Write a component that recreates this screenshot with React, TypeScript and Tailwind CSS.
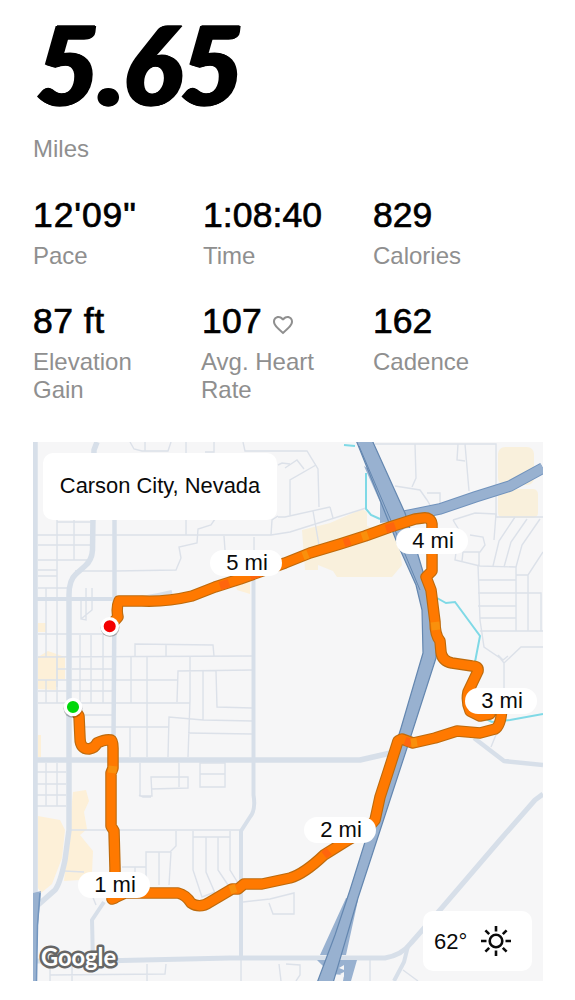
import { MdFavoriteBorder } from 'react-icons/md';

const stats = [
  { value: "12'09\"", label: 'Pace', tracking: 'tracking-[0.9px]' },
  { value: '1:08:40', label: 'Time', className: 'pl-px', tracking: 'tracking-[0.1px]' },
  { value: '829', label: 'Calories', tracking: 'tracking-normal' },
  { value: '87 ft', label: 'Elevation Gain', tracking: 'tracking-[0.5px]' },
  { value: '107', label: 'Avg. Heart Rate', heart: true, tracking: 'tracking-[0.2px]' },
  { value: '162', label: 'Cadence', tracking: 'tracking-normal' },
];

const minorRoads = [
  // north west
  'M130 442L134 449L142 451H168L171 442M145 442V451M186 442V453M214 442V452H205M243 442L245 451H307L318 469L319 507',
  'M57 520V687M74 520V560M57 522H92M38 545H92M38 560H88M38 570H57M38 576H57M75 571H115',
  'M35 535H271L290 532L366 508M333 518L330 507M115 571L176 570L181 558L179 547L197 543L198 529L211 525L215 519M186 520V535',
  'M278 465L282 463L290 464M290 515V480L316 465M285 468L297 460L304 469M278 516L272 520L271 535M278 517H285L330 507M313 511L319 545M224 536L225 550M254 537V550',
  'M38 588H68M46 588V657M86 588V620L81 619V600M92 588V610L81 619',
  // north east
  'M375 444H496V517H543M415 444L416 478L412 487M395 486L420 490L427 500L430 505M427 493H440V505M458 444L457 460L465 461M465 444L469 491',
  'M453 520L475 513L496 514L494 540M453 520L459 530L455 560L480 566L516 567V631M470 535L483 537L485 545L480 552H463L462 561M479 552V566',
  'M515 517L499 541L493 566M527 519L511 542L504 567M540 519L522 545L516 567M543 552L528 575V631M478 565L480 620L484 647L500 658L504 663L521 647H543M478 580H516M478 593H541V631M478 606H516M480 618H516M480 631H543M516 575H528M498 655L503 660L508 656M504 663V690M500 725L491 747',
  // downtown grid
  'M38 634H112M38 657L253 656M72 669H112M57 669H67M38 680H177M38 691H112M38 703H190M85 715H112M82 727H169M80 635V703M91 635V703M103 635V703M46 680V703M57 657V703',
  'M131 657V703M147 657V757M190 657L190 700L188 757M135 657V644L213 645L214 656M166 645V656M177 702L178 671L253 670M203 671V720M216 671L217 707L252 708M168 757L169 717L203 720L253 721M130 727V757M188 733L252 734',
  'M46 763V806M57 763V806M36 772H66M36 784H66M36 795H66M36 806H66M140 763V796H152L151 777H188V788L151 789M179 763V787M200 763H225V787H200ZM200 774H225M139 795L143 797H151',
  // south
  'M70 830H240M122 867H146M135 867V880M146 885V852H170L176 846V831M159 852V885M171 852L169 885M193 831V870L202 897L215 892M193 837H230M206 837V872L215 893M218 837V870L230 888M230 831V870L238 883M64 871L84 872M88 885L96 905',
  'M243 902L270 899L294 893V914H273L269 903M50 975L165 974L166 964M50 964V981M72 964V981M147 964V981M241 960V981M279 964L281 981M286 964L300 965V975L296 981M370 960V981M403 970L418 981',
];

const mainRoads = [
  { d: 'M35 442V894', w: 5.5 },
  { d: 'M97 442L94 450L92.500 550Q92 560 85 566L76 574Q69 580 69 595V800L69 830L65 860Q60 884 55 890L38 905', w: 5.5 },
  { d: 'M114.500 518V599L113.500 740', w: 4.5 },
  { d: 'M35 599H115Q135 601 172 592', w: 4 },
  { d: 'M253.500 575V795Q256 810 250 817L241 831V958', w: 4 },
  { d: 'M35 760H360L395 752', w: 5.5 },
  { d: 'M104 902L92 920L93 962', w: 4 },
  { d: 'M36 961L100 961L230 958H385Q402 955 411 943L440 910L500 840L535 800L543 794', w: 5 },
  { d: 'M408 946L404 962L394 981', w: 4 },
  { d: 'M474 738L504 761L543 765', w: 4.5 },
];

const freeway =
  'M356 440L388 520L398 545L416 585L422 610L423 653L401 728L365 842L350 890L335 935L317 983H333L358 898L390 800L408 745L436 658L437 635L430 600L424 575L415 545L405 513L372 440Z';
const arterial = 'M400 517L440 509L475 497L510 486L543 468';

const route =
  'M73 707L79 716L80 738Q80 749 89 749Q95 748 97 743Q105 739 111 740Q113 741 113 748L113 768L111 773L111 826L114 831L115 868L115 898L112 899L125 893L178 893Q186 895 191 903Q200 909 210 902L232 889L238 889L244 884L262 884L290 878Q304 874 324 855L348 840Q368 830 375 820L380 797L391 763L398 741L402 739L413 743L435 738L457 731L480 733L495 729Q501 726 502 708M490 714L480 716L470 711Q466 702 468 692L478 671Q479 666 472 666L452 663Q442 661 441 652L440 641Q435 635 435 622L431 590L426 577L432 571V524Q431 517 423 518L415 519L390 527L365 536L340 544L310 553L285 563L240 579L215 587L192 596Q167 602 142 601L119 601Q116 608 118 617L111 625';

const mileMarkers = [
  { text: '5 mi', className: 'left-[177px] top-[108px]' },
  { text: '4 mi', className: 'left-[363px] top-[86px]' },
  { text: '3 mi', className: 'left-[432px] top-[246px]' },
  { text: '2 mi', className: 'left-[271px] top-[375px]' },
  { text: '1 mi', className: 'left-[45px] top-[430px]' },
];

const RouteMap = () => (
  <svg viewBox="33 442 510 539" className="block h-full w-full">
    <rect x="33" y="442" width="510" height="539" fill="#f6f6f7" />

    <g fill="#f9f0dc">
      <path d="M302 530L330 523L362 509L367 512V526L398 535L402 565L392 577H337L333 571L318 565V570H305Z" />
      <rect x="498" y="447" width="36" height="38" rx="7" />
      <rect x="498" y="489" width="40" height="29" rx="5" />
    </g>
    <g fill="#fdf0d8">
      <path d="M38 623H46V632H38ZM38 657L48 651L65 657V679H56V690L38 689ZM38 735H41V757H38Z" />
      <path d="M38 816L60 820L65 830L62 858L52 884L41 893L38 888Z" />
      <path d="M73 792L86 790L89 801L84 812L87 829L80 835L93 851L92 873L80 880L64 881Z" />
      <path d="M236 586L250 579V594L237 590Z" />
    </g>

    <g fill="none" stroke="#dce1e9" strokeWidth="1.4">
      {minorRoads.map((d) => (
        <path key={d} d={d} />
      ))}
    </g>
    <g fill="none" stroke="#d7dfe9" strokeLinejoin="round">
      {mainRoads.map((road) => (
        <path key={road.d} d={road.d} strokeWidth={road.w} />
      ))}
    </g>

    {/* creek */}
    <path
      d="M344 445L355 446M366 473V509L371 515L380 519M437 598L446 603L455 602L480 636L475 662M484 718L492 722L510 720L543 714"
      fill="none"
      stroke="#7fd9e6"
      strokeWidth="2"
    />

    {/* freeway and ramps */}
    <path d="M33 893L41 891L38 925L36 981H33Z" fill="#98b1d0" />
    <path d="M40 893L37.500 925L36.500 981" fill="none" stroke="#7295bf" strokeWidth="1.5" />
    <path d="M364 466L380 502V523L396 521L390 483ZM346 898L320 955H346L358 900ZM317 960L357 960L351 981H343L344 975L331 974Z" fill="#98b1d0" />
    <path d="M339 968L344 965V970ZM340 974L344 972V977Z" fill="#f6f6f7" />
    <path d={arterial} fill="none" stroke="#7092bc" strokeWidth="11.500" />
    <path d={arterial} fill="none" stroke="#98b1d0" strokeWidth="9.500" />
    <path d={freeway} fill="#98b1d0" stroke="#6487b0" strokeWidth="1.200" strokeLinejoin="round" />
    <path d="M359 446L392 523L420 590" fill="none" stroke="#6487b0" strokeWidth="1" />

    <g fill="none" strokeLinejoin="round" strokeLinecap="round">
      <path d={route} stroke="#bd6a0c" strokeWidth="11.500" />
      <path d={route} stroke="#ff7900" strokeWidth="9.300" />
      <g strokeWidth="8.500" strokeLinecap="butt">
        <path d="M220 586L229 583M250 576L261 572M344 543L350 541M386 529L395 526M405 741L411 743M324 855L329 851" stroke="#ff650d" />
        <path d="M303 556L308 554M362 537L368 535M435 622L436 630M411 743L417 742M230 890L236 888M113 766L112 773" stroke="#f9900c" />
      </g>
    </g>

    {/* finish and start */}
    <g stroke="#fff" strokeWidth="3.300">
      <circle cx="110" cy="627.500" r="9.500" fill="#000" stroke="none" opacity=".25" />
      <circle cx="73" cy="708.500" r="9.500" fill="#000" stroke="none" opacity=".25" />
      <circle cx="109.700" cy="626.300" r="7.700" fill="#f40000" />
      <circle cx="73" cy="707" r="7.700" fill="#00d70b" />
    </g>

    <text
      x="41"
      y="966"
      textLength="75"
      lengthAdjust="spacingAndGlyphs"
      fontFamily="Lato, sans-serif"
      fontSize="24"
      fontWeight="700"
      fill="#fff"
      stroke="#666"
      strokeWidth="5"
      strokeLinejoin="round"
      paintOrder="stroke"
    >
      Google
    </text>
  </svg>
);

const SunIcon = () => (
  <svg viewBox="-15 -15 30 30" className="h-[30px] w-[30px]" fill="none" stroke="#0b0b0b" strokeWidth="2.600">
    <circle r="6.300" />
    <path d="M0-15V-9.500M0 9.500V15M-15 0H-9.500M9.500 0H15M-10.600-10.600L-6.800-6.800M6.800 6.800L10.600 10.600M-10.600 10.600L-6.800 6.800M6.800-6.800L10.600-10.600" />
  </svg>
);

const App = () => {
  return (
    <main className="h-[1000px] w-[575px] bg-white px-8 font-['Liberation_Sans',Arial,sans-serif] text-[#0a0a0a]">
      <header className="h-[195px]">
        <h1 className="h-[135px] pl-[4px] whitespace-nowrap font-['Lato',sans-serif] text-[108px] leading-[126px] font-black text-black italic tracking-[-0.5px] [-webkit-text-stroke:1.5px_#000] [text-shadow:1px_0_#000,2px_0_#000,-1px_0_#000,-2px_0_#000]">
          5.65
        </h1>
        <p className="pl-px text-[24px] leading-7 text-[#8f8f8f]">Miles</p>
      </header>

      <section className="grid h-[247px] grid-cols-[169px_171px_150px] content-start gap-y-[31px] pl-px">
        {stats.map((stat) => (
          <div key={stat.label} className={stat.className}>
            <div className={`flex h-10 items-center text-[35.5px] leading-10 text-black [-webkit-text-stroke:0.7px_#000] ${stat.tracking}`}>
              {stat.value}
              {stat.heart && <MdFavoriteBorder className="mt-2 ml-[9px] text-[24px] text-[#8f8f8f] [-webkit-text-stroke:0]" />}
            </div>
            <p className={`mt-[7px] w-[130px] text-[24px] leading-7 text-[#8f8f8f] ${stat.heart ? '-ml-px' : ''}`}>{stat.label}</p>
          </div>
        ))}
      </section>

      <section className="relative ml-px h-[539px] w-[510px] overflow-hidden">
        <RouteMap />
        <div className="absolute top-[11px] left-2.5 flex h-[67px] w-[234px] items-center justify-center rounded-[10px] bg-white text-[21.9px]">
          Carson City, Nevada
        </div>
        {mileMarkers.map((marker) => (
          <div
            key={marker.text}
            className={`absolute flex h-[26px] w-[72px] items-center justify-center rounded-full bg-white pl-0.5 text-[22px] leading-none ${marker.className}`}
          >
            {marker.text}
          </div>
        ))}
        <div className="absolute top-[469px] left-[390px] flex h-[60px] w-[109px] items-center gap-[14px] rounded-[10px] bg-white pl-[11px] text-[22px]">
          <span>62°</span>
          <SunIcon />
        </div>
      </section>
    </main>
  );
};

export default App;
